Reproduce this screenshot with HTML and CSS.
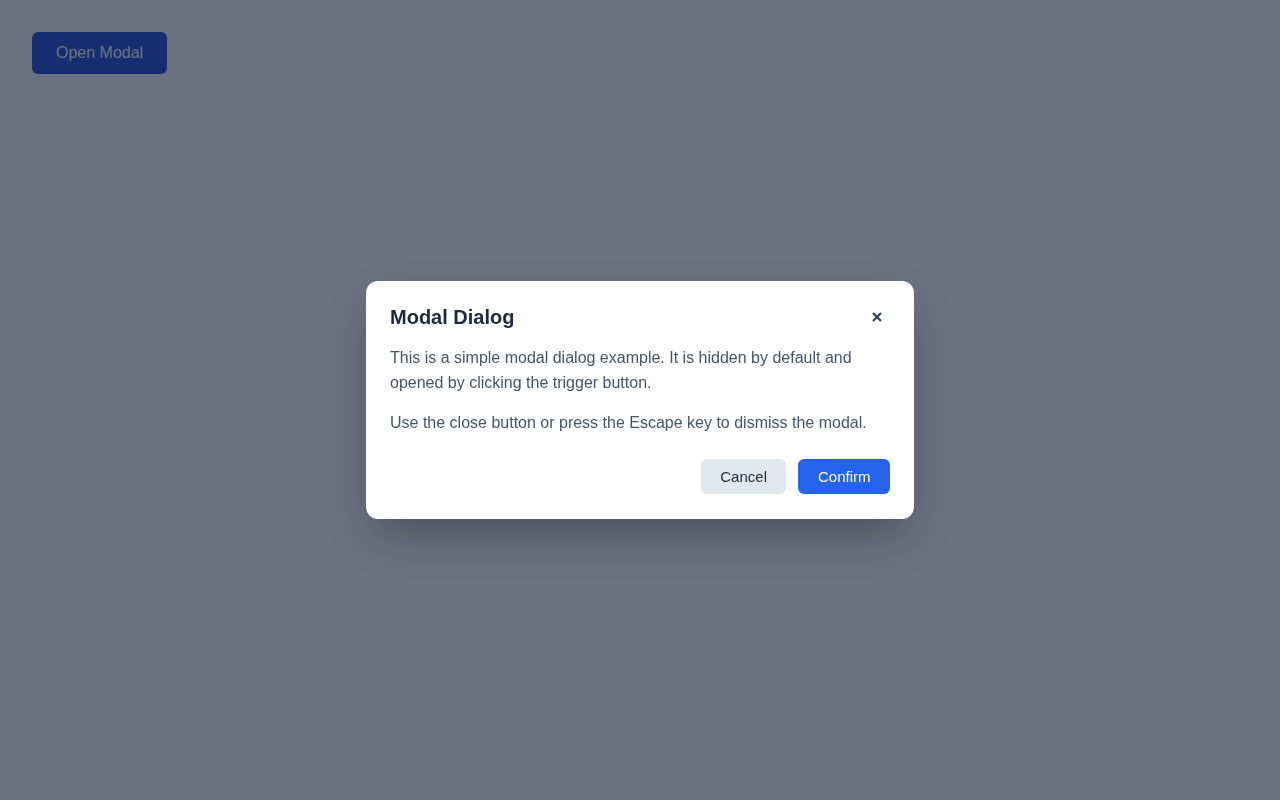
FILE: index.html
```html
<!DOCTYPE html>
<html lang="en">
<head>
<meta charset="utf-8">
<title>Modal Dialog</title>
<link rel="stylesheet" href="styles.css">
</head>
<body>
  <main class="page">
    <button class="open-btn" type="button">Open Modal</button>
  </main>
  <div class="overlay">
    <div class="modal" role="dialog" aria-labelledby="modal-title">
      <div class="modal-header">
        <h2 id="modal-title" class="modal-title">Modal Dialog</h2>
        <button class="close-btn" type="button" aria-label="Close">
          <svg class="close-icon" viewBox="0 0 10 10" width="10" height="10" aria-hidden="true">
            <path d="M1 1 L9 9 M9 1 L1 9" />
          </svg>
        </button>
      </div>
      <p class="modal-text">This is a simple modal dialog example. It is hidden by default and opened by clicking the trigger button.</p>
      <p class="modal-text">Use the close button or press the Escape key to dismiss the modal.</p>
      <div class="modal-actions">
        <button class="btn btn-secondary" type="button">Cancel</button>
        <button class="btn btn-primary" type="button">Confirm</button>
      </div>
    </div>
  </div>
</body>
</html>
```

FILE: styles.css
```css
* { box-sizing: border-box; }
html, body {
  margin: 0;
  padding: 0;
  height: 100%;
}
body {
  font-family: "Liberation Sans", Arial, sans-serif;
  background: #ffffff;
  color: #1e293b;
}
.page {
  padding: 32px;
}
.open-btn {
  font-family: inherit;
  font-size: 16px;
  line-height: 18px;
  padding: 12px 24px;
  border: none;
  border-radius: 6px;
  background: #1d4ed8;
  color: #ffffff;
  cursor: pointer;
}
.overlay {
  position: fixed;
  inset: 0;
  background: rgba(15, 27, 50, 0.62);
  display: flex;
  align-items: center;
  justify-content: center;
}
.modal {
  width: 548px;
  background: #ffffff;
  border-radius: 12px;
  padding: 24px 24px 25px;
  box-shadow: 0 20px 45px -8px rgba(0, 0, 0, 0.3);
}
.modal-header {
  display: flex;
  align-items: center;
  justify-content: space-between;
  margin-bottom: 16px;
}
.modal-title {
  margin: 0;
  font-size: 20px;
  line-height: 24px;
  font-weight: 700;
  color: #1e293b;
}
.close-btn {
  display: flex;
  align-items: center;
  justify-content: center;
  width: 24px;
  height: 24px;
  margin-right: 1px;
  background: none;
  border: none;
  padding: 0;
  cursor: pointer;
}
.close-icon {
  display: block;
  stroke: #334155;
  stroke-width: 2.2;
  stroke-linecap: butt;
  fill: none;
}
.modal-text {
  margin: 0 0 15px;
  font-size: 16px;
  line-height: 25px;
  color: #475569;
}
.modal-actions {
  display: flex;
  justify-content: flex-end;
  gap: 12px;
  margin-top: 24px;
}
.btn {
  font-family: inherit;
  font-size: 15px;
  line-height: 17px;
  padding: 9px 19.5px;
  border: none;
  border-radius: 6px;
  cursor: pointer;
}
.btn-secondary {
  background: #e2e8f0;
  color: #1e293b;
}
.btn-primary {
  background: #2563eb;
  color: #ffffff;
}
```
